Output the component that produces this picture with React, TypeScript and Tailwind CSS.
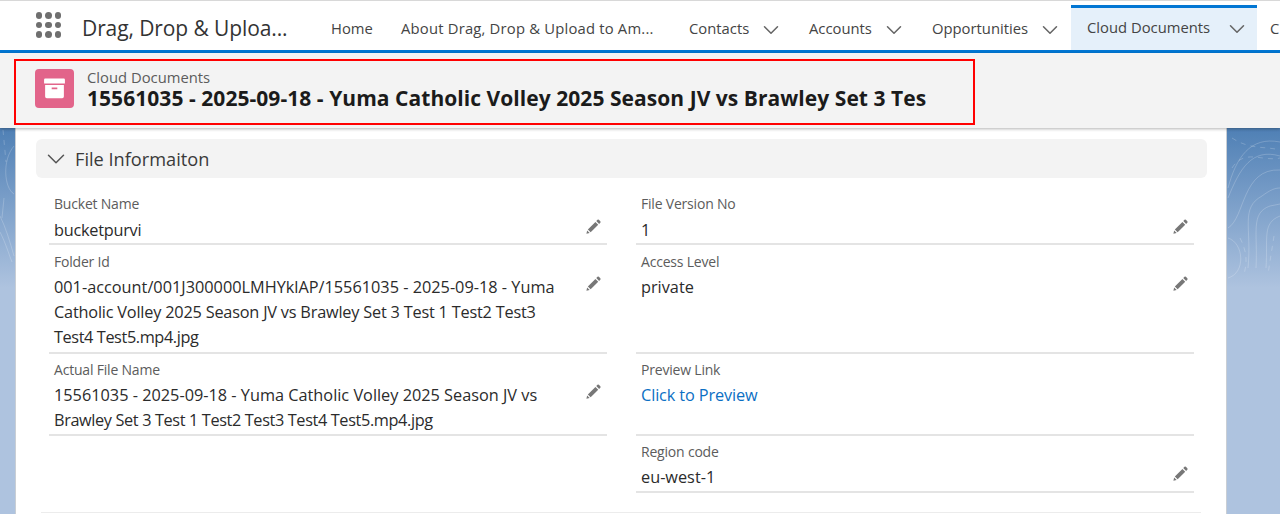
import React from 'react';
import { ChevronDown } from 'lucide-react';

const Pencil = () => (
  <svg viewBox="0 0 24 24" className="w-[17px] h-[17px] text-[#777]" fill="currentColor">
    <path d="M17.6 2.6a1.4 1.4 0 0 1 2 0l2 2a1.4 1.4 0 0 1 0 2l-1.7 1.7-4-4zM14.7 5.5l4 4L8 20.2l-4-4zM3 17.6l3.6 3.6L2 22.2z" />
  </svg>
);

const dropItems = [
  { label: 'Contacts', width: 'w-[120px]' },
  { label: 'Accounts', width: 'w-[123px]' },
  { label: 'Opportunities', width: 'w-[139px]' },
];

type Line = { text: string; tracking?: string };
type FieldProps = { label: string; lines: Line[]; height: string; editTop?: string; link?: boolean };

const Field = ({ label, lines, height, editTop, link = false }: FieldProps) => (
  <div className={`relative ${height} pl-[5px] border-b-2 border-[#e4e4e4]`}>
    <div className="text-[14px] leading-[18px] text-[#5c5c5c] tracking-[-0.2px]">{label}</div>
    <div className={`mt-[4px] text-[16.3px] leading-[25px] ${link ? 'text-[#0b6fc4]' : 'text-[#2b2b2b]'}`}>
      {lines.map((l) => (
        <div key={l.text} className={`whitespace-nowrap ${l.tracking ?? ''}`}>{l.text}</div>
      ))}
    </div>
    {editTop && (
      <div className={`absolute right-[5px] ${editTop}`}>
        <Pencil />
      </div>
    )}
  </div>
);

export default function App() {
  return (
    <div className="relative w-[1280px] h-[514px] overflow-hidden flex flex-col bg-gradient-to-b from-[#4f80b5] from-[25%] to-[#aec3df] to-[56%] font-['Open_Sans','Noto_Sans',sans-serif]">
      {/* contour lines behind the card */}
      <svg className="absolute left-0 top-[128px] w-[1280px] h-[180px]" viewBox="0 0 1280 180" fill="none" stroke="#fff" strokeOpacity="0.2" strokeWidth="1">
        <path d="M1228 60C1236 30 1250 8 1280 14" />
        <path d="M1228 70C1240 40 1252 20 1280 28" />
        <path d="M1228 100C1245 90 1242 40 1280 42" />
        <path d="M1248 140C1252 100 1240 80 1262 68C1270 62 1275 60 1280 60" />
        <path d="M1256 140C1258 105 1250 85 1270 78L1280 76" />
        <path d="M1266 140C1268 110 1262 95 1280 88" />
        <path d="M1228 150C1246 145 1244 115 1228 110" />
        <path d="M1232 10C1250 22 1265 18 1280 22M1232 40C1245 20 1262 34 1280 30M1240 110C1246 122 1248 132 1244 146M1274 108L1268 146" strokeDasharray="5 5" />
        <path d="M14 18C2 32 4 60 14 66M0 88C6 100 10 114 14 128M0 104C6 116 8 124 12 134M4 70L2 90" />
        <path d="M3 2L6 34" strokeDasharray="5 5" />
      </svg>
      <div className="h-[1px] bg-[#d8d8d8]" />
      {/* top nav */}
      <nav className="relative h-[52px] shrink-0 flex bg-white border-b-[3px] border-[#0176d3] overflow-hidden">
        <div className="w-[82px] flex items-center justify-end pr-[21px] pb-[1px]">
          <div className="grid grid-cols-3 gap-x-[3px] gap-y-[3px]">
            {Array.from({ length: 9 }).map((_, i) => (
              <span key={i} className="w-[6.5px] h-[6.5px] rounded-full bg-[#6f6f6f]" />
            ))}
          </div>
        </div>
        <div className="w-[231px] pt-[12px] text-[21px] leading-[30px] text-[#333] tracking-[-0.1px] whitespace-nowrap">Drag, Drop &amp; Uploa...</div>
        <div className="w-[70px] pl-[18px] pt-[15px] text-[14.8px] leading-[24px] text-[#444] whitespace-nowrap">Home</div>
        <div className="w-[306px] pl-[18px] pt-[15px] text-[14.8px] leading-[24px] text-[#444] tracking-[0.2px] whitespace-nowrap">About Drag, Drop &amp; Upload to Am...</div>
        {dropItems.map((n) => (
          <div key={n.label} className={`${n.width} pt-[15px] flex text-[14.8px] leading-[24px] text-[#444] whitespace-nowrap`}>
            <span>{n.label}</span>
            <ChevronDown className="ml-[9px] mt-[1px] w-[26px] h-[26px] text-[#666]" strokeWidth={1.4} />
          </div>
        ))}
        <div className="w-[186px] h-[45px] mt-[4px] pl-[16px] pt-[7px] flex bg-[#e5f0fa] border-t-[3px] border-[#0176d3] text-[14.8px] leading-[24px] text-[#444] whitespace-nowrap">
          <span>Cloud Documents</span>
          <ChevronDown className="ml-[14px] mt-[1px] w-[26px] h-[26px] text-[#666]" strokeWidth={1.4} />
        </div>
        <div className="pl-[13px] pt-[15px] text-[14.8px] leading-[24px] text-[#444]">C</div>
      </nav>
      {/* highlight header */}
      <header className="h-[75px] shrink-0 bg-[#f3f3f3] shadow-[0_1px_3px_rgba(0,0,0,0.3)] pl-[14px] pt-[6px] relative z-10">
        <div className="w-[961px] h-[66px] border-2 border-[#ff0000] flex items-start pl-[19px] pt-[8px]">
          <div className="w-[39px] h-[39px] rounded-[4px] bg-[#e2648a] flex items-center justify-center">
            <svg viewBox="0 0 24 24" className="w-[25px] h-[25px]" fill="#fff">
              <path d="M2 3.5a1 1 0 0 1 1-1h18a1 1 0 0 1 1 1v3.7H2zM3 8.7h18v11a1.6 1.6 0 0 1-1.6 1.6H4.6A1.6 1.6 0 0 1 3 19.7zm6.3 2.4v1.5h5.4v-1.5z" />
            </svg>
          </div>
          <div className="ml-[13px] -mt-[1px]">
            <div className="text-[14.8px] leading-[18px] text-[#5c5c5c]">Cloud Documents</div>
            <div className="text-[21px] leading-[24px] font-bold text-[#1b1b1b] tracking-[0.05px] whitespace-nowrap">
              15561035 - 2025-09-18 - Yuma Catholic Volley 2025 Season JV vs Brawley Set 3 Tes
            </div>
          </div>
        </div>
      </header>
      {/* record card */}
      <main className="relative ml-[15px] w-[1212px] flex-1 bg-white border-x border-[#c9ced4] pl-[20px] pr-[19px] pt-[11px]">
        <div className="h-[39px] rounded-[6px] bg-[#f3f3f3] flex items-center pl-[5px]">
          <ChevronDown className="w-[30px] h-[30px] text-[#555]" strokeWidth={1.2} />
          <span className="ml-[4px] text-[18.2px] leading-[24px] text-[#3a3a3a]">File Informaiton</span>
        </div>
        <div className="grid grid-cols-[558px_558px] gap-x-[29px] ml-[13px] pt-[17px]">
          <div>
            <Field label="Bucket Name" lines={[{ text: 'bucketpurvi', tracking: 'tracking-[-0.25px]' }]} height="h-[50px] [&>div:nth-child(2)]:mt-[5px]" editTop="top-[23px]" />
            <Field
              label="Folder Id"
              lines={[
                { text: '001-account/001J300000LMHYklAP/15561035 - 2025-09-18 - Yuma' },
                { text: 'Catholic Volley 2025 Season JV vs Brawley Set 3 Test 1 Test2 Test3', tracking: 'tracking-[-0.2px]' },
                { text: 'Test4 Test5.mp4.jpg', tracking: 'tracking-[-0.4px]' },
              ]}
              height="h-[109px] pt-[8px]"
              editTop="top-[30px]"
            />
            <Field
              label="Actual File Name"
              lines={[
                { text: '15561035 - 2025-09-18 - Yuma Catholic Volley 2025 Season JV vs' },
                { text: 'Brawley Set 3 Test 1 Test2 Test3 Test4 Test5.mp4.jpg', tracking: 'tracking-[-0.37px]' },
              ]}
              height="h-[82px] pt-[7px]"
              editTop="top-[29px]"
            />
          </div>
          <div>
            <Field label="File Version No" lines={[{ text: '1' }]} height="h-[50px] [&>div:nth-child(2)]:mt-[5px]" editTop="top-[23px]" />
            <Field label="Access Level" lines={[{ text: 'private' }]} height="h-[109px] pt-[8px]" editTop="top-[30px]" />
            <Field label="Preview Link" lines={[{ text: 'Click to Preview', tracking: 'tracking-[-0.12px]' }]} height="h-[82px] pt-[7px]" link />
            <Field label="Region code" lines={[{ text: 'eu-west-1' }]} height="h-[57px] pt-[7px]" editTop="top-[29px]" />
          </div>
        </div>
        <div className="h-[20px] ml-[5px] mr-[6px] border-b border-[#ececec]" />
      </main>
    </div>
  );
}
